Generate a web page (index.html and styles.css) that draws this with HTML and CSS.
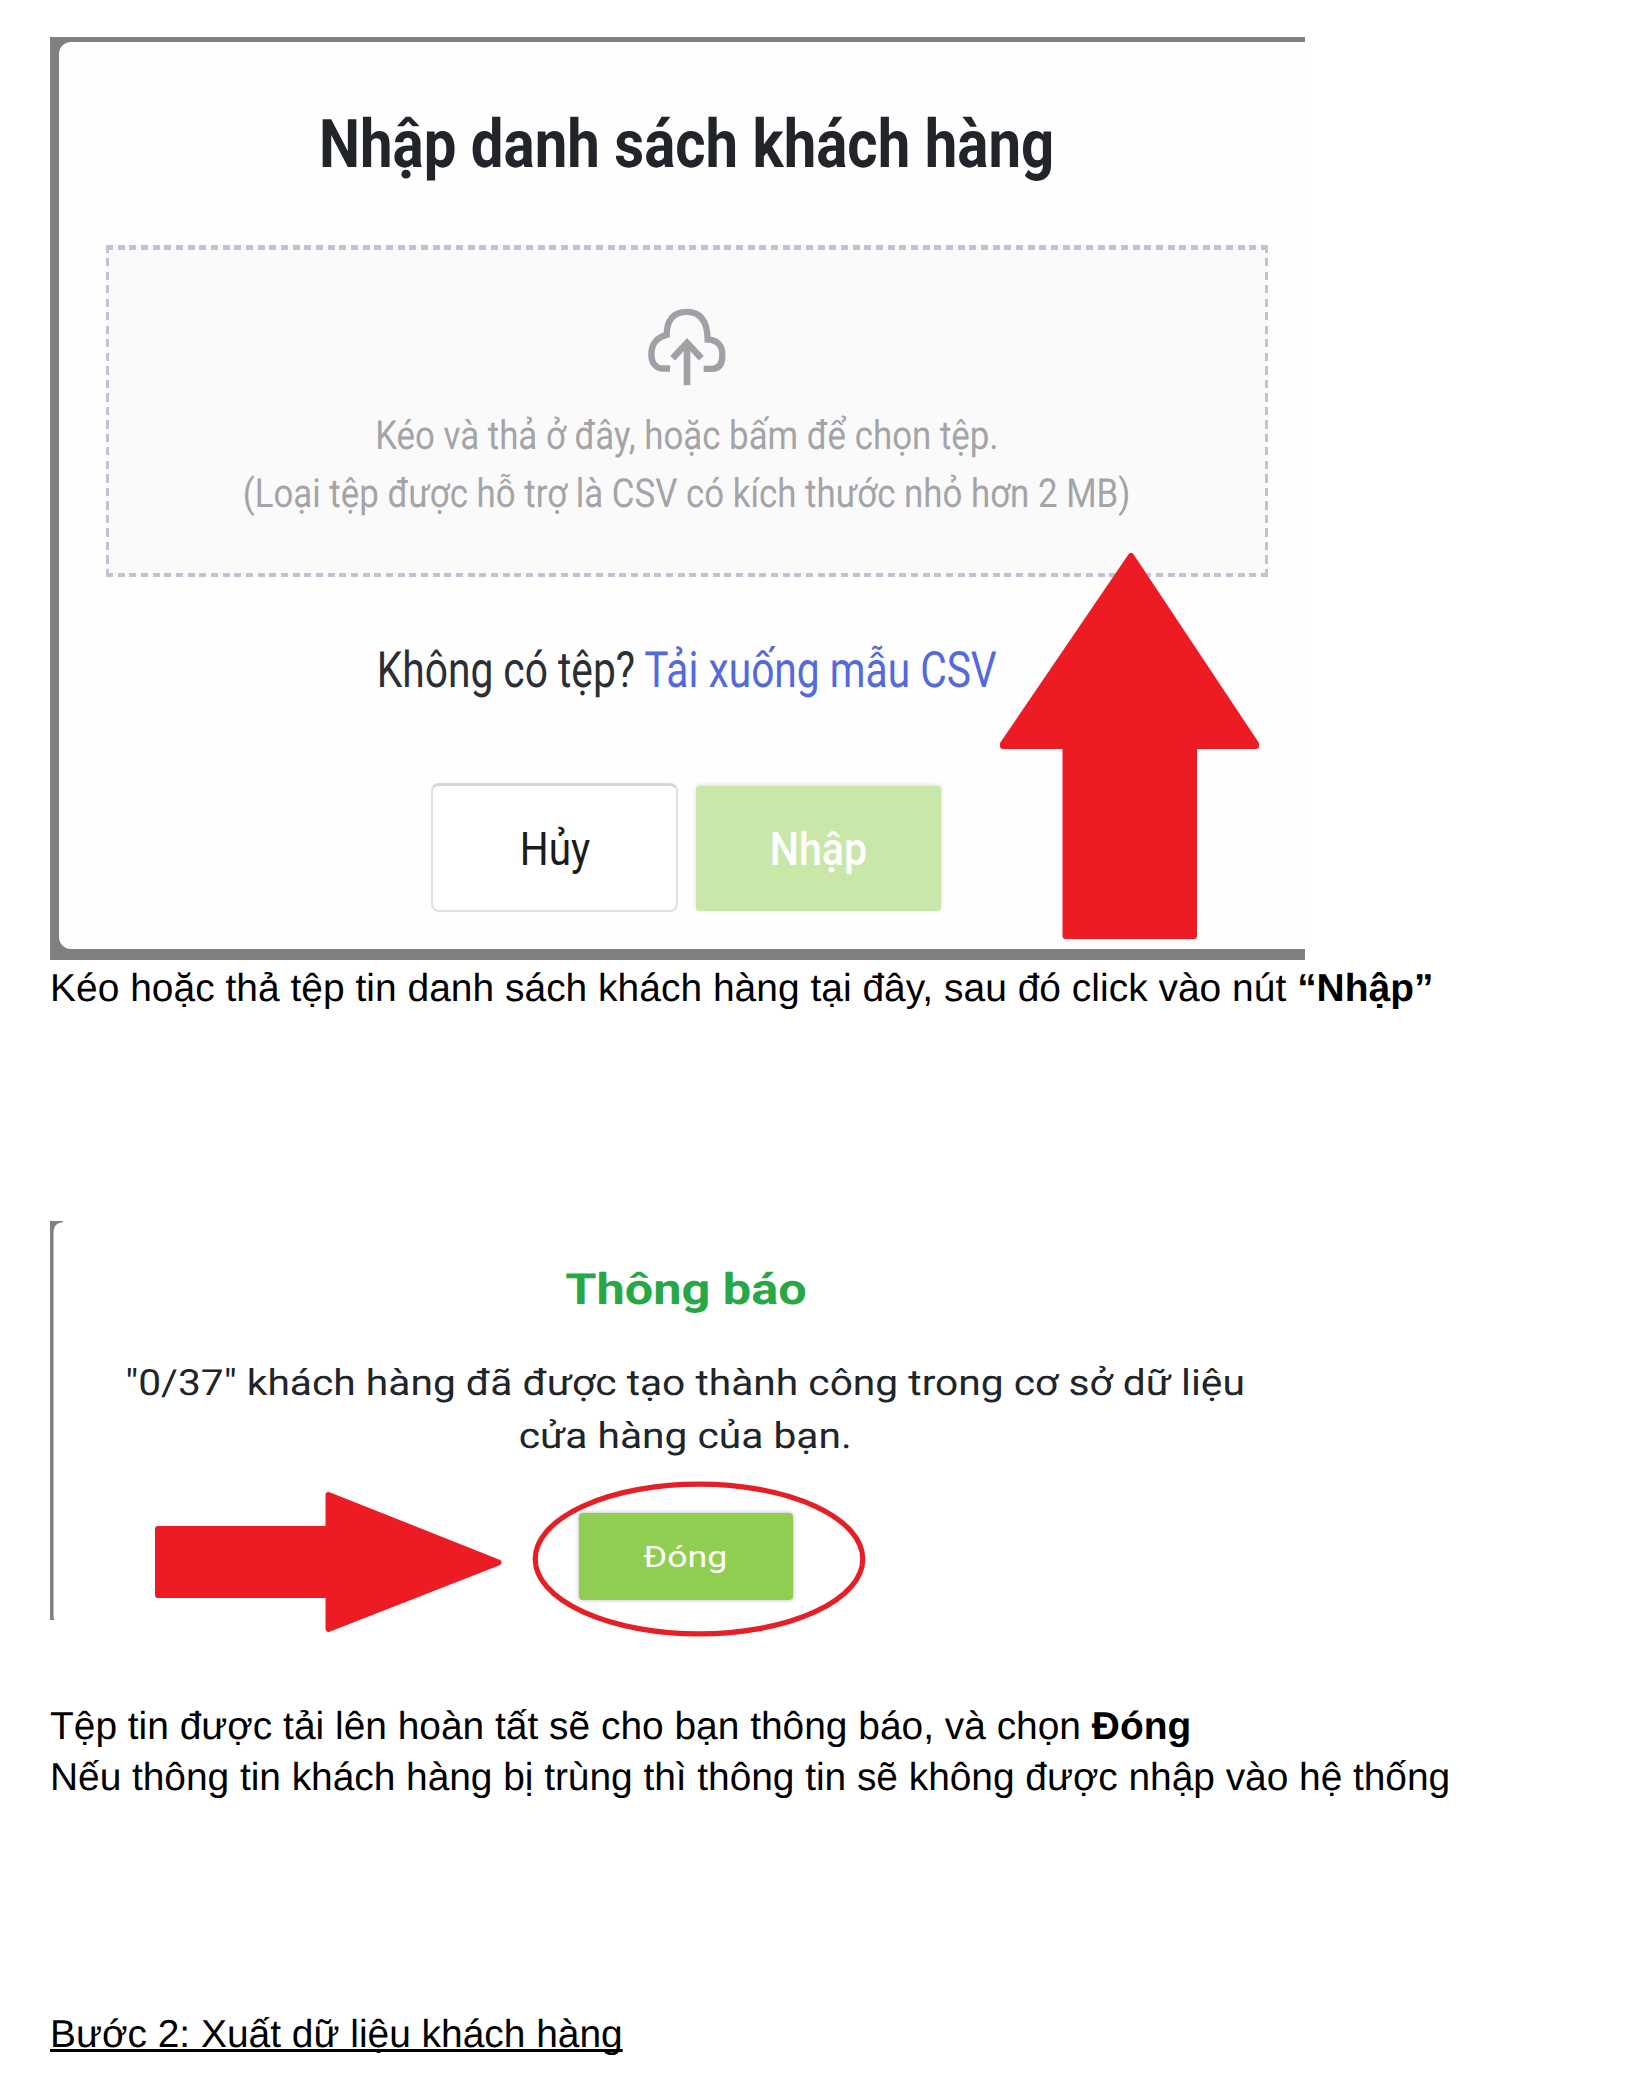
FILE: index.html
```html
<!DOCTYPE html>
<html lang="vi">
<head>
<meta charset="utf-8">
<title>Nhập danh sách khách hàng</title>
<link rel="stylesheet" href="styles.css">
</head>
<body>
<main class="page">
  <figure class="import">
    <div class="import-panel">
      <h1 class="import-title"><span>Nhập danh sách khách hàng</span></h1>
      <div class="dropzone">
        <svg class="cloud" viewBox="81 52.5 240 240" fill="none" stroke="#a0a1a7">
          <path stroke-width="19" d="M150 237H128C106 236 94 219 94 194C94 163 112 143 140 136C140 93 159 67 201 67C243 67 262 96 263 150C291 151 308 168 307 197C307 225 296 238 275 238H251"/>
          <path stroke-width="20" d="M201 287V157"/>
          <path stroke-width="20" d="M158 206L201 160L244 206"/>
        </svg>
        <p class="hint"><span>Kéo và thả ở đây, hoặc bấm để chọn tệp.</span></p>
        <p class="hint"><span>(Loại tệp được hỗ trợ là CSV có kích thước nhỏ hơn 2 MB)</span></p>
      </div>
      <p class="sample"><span>Không có tệp? <a class="link">Tải xuống mẫu CSV</a></span></p>
      <div class="actions">
        <button class="btn cancel"><span>Hủy</span></button>
        <button class="btn submit"><span>Nhập</span></button>
      </div>
    </div>
    <svg class="arrow-up" viewBox="0 0 262 388">
      <path d="M132 4L4 192V194H66.500V384H195V194H257V192Z"/>
    </svg>
  </figure>
  <p class="text caption">Kéo hoặc thả tệp tin danh sách khách hàng tại đây, sau đó click vào nút <b>“Nhập”</b></p>

  <figure class="notice">
    <svg class="notice-edge" viewBox="0 0 14 399"><path d="M0 0H13V1C6 2 3.500 5 3.500 13V396L4.500 399H0Z"/></svg>
    <h2 class="notice-title"><span>Thông báo</span></h2>
    <p class="message"><span>"0/37" khách hàng đã được tạo thành công trong cơ sở dữ liệu</span></p>
    <p class="message"><span>cửa hàng của bạn.</span></p>
    <button class="btn close"><span>Đóng</span></button>
    <svg class="arrow-right" viewBox="0 0 348 142">
      <path d="M3 38H173.500V4L343.500 71.500L173.500 138V104H3Z"/>
    </svg>
    <svg class="ring" viewBox="0 0 334 156"><ellipse cx="167" cy="78" rx="163.800" ry="74.900"/></svg>
  </figure>
  <p class="text done">Tệp tin được tải lên hoàn tất sẽ cho bạn thông báo, và chọn <b>Đóng</b></p>
  <p class="text duplicate">Nếu thông tin khách hàng bị trùng thì thông tin sẽ không được nhập vào hệ thống</p>
  <h2 class="text step">Bước 2: Xuất dữ liệu khách hàng</h2>
</main>
</body>
</html>
```
FILE: styles.css
```css
* { box-sizing: border-box; }
body { margin: 0; background: #fff; font-family: Roboto, sans-serif; text-rendering: geometricPrecision; }
h1, h2, p, figure { margin: 0; }
.page { height: 2092px; padding: 37px 0 0 50px; overflow: hidden; }

/* condensed or widened lettering is scaled about its centre */
h1 span, h2 span, p span, .btn span { display: inline-block; white-space: nowrap; }

.import { position: relative; width: 1255px; height: 923px; padding: 5px 0 11px 9px; background: #808080; }
.import-panel {
  display: flex; flex-direction: column; align-items: center;
  height: 907px; padding: 63px 37px 0 47px;
  background: #fefefe; border-radius: 12px 0 0 12px;
}
.import-title { height: 80px; font-size: 67px; line-height: 80px; font-weight: 700; color: #212529; }
.import-title span { transform: scaleX(.868); }

.dropzone {
  --d: #c2c2d4;
  display: flex; flex-direction: column; align-items: center;
  width: 1162px; height: 332px; margin-top: 60px; padding-top: 62px;
  background:
    repeating-linear-gradient(90deg, var(--d) 0 7px, transparent 7px 11.667px) top / 100% 5px no-repeat,
    repeating-linear-gradient(90deg, var(--d) 0 7px, transparent 7px 11.667px) bottom / 100% 4px no-repeat,
    repeating-linear-gradient(180deg, var(--d) 0 8px, transparent 8px 13.5px) left / 3px 100% no-repeat,
    repeating-linear-gradient(180deg, var(--d) 0 8px, transparent 8px 13.5px) right / 3px 100% no-repeat,
    #fafafa;
}
.cloud { width: 80px; height: 80px; margin-bottom: 20px; flex: none; }
.hint { height: 58px; font-size: 40px; line-height: 58px; color: #a4a4a8; }
.hint span { transform: scaleX(.871); }

.sample { height: 60px; margin-top: 64px; font-size: 50px; line-height: 60px; color: #2b2e32; }
.sample span { transform: scaleX(.8142); }
.link { color: #5369dd; }

.actions { display: flex; gap: 18px; margin: 82px 2px 0 0; }
.btn { display: flex; justify-content: center; border: 0; padding: 0; font-family: inherit; text-align: center; }
.cancel {
  width: 247px; height: 129px; border: 2px solid #e0e0e0; border-top: 3px solid #d6d6d6; border-radius: 8px;
  background: #fff; color: #1c1c1c; font-size: 46px; line-height: 126px;
}
.cancel span { transform: scaleX(.881); }
.submit {
  width: 245px; height: 125px; margin-top: 3px; border-radius: 4px;
  background: #c9e7a9; box-shadow: 0 -1px 4px rgba(0, 0, 0, .14); color: #fff; font-size: 46px; font-weight: 500; line-height: 126px;
}
.submit span { transform: scaleX(.8953); }

/* annotations drawn over the panels */
.arrow-up, .arrow-right { position: absolute; fill: #ed1c24; stroke: #ed1c24; stroke-width: 6px; stroke-linejoin: round; }
.arrow-up { left: 949px; top: 515px; width: 262px; height: 388px; }
.arrow-right { left: 105px; top: 270px; width: 348px; height: 142px; }
.ring { position: absolute; left: 482px; top: 260px; width: 334px; height: 156px; fill: none; stroke: #e61e25; stroke-width: 5.2px; }

.text { height: 51px; font: 38.9px/51px "Liberation Sans", Arial, sans-serif; color: #000; white-space: nowrap; }
.caption { margin-top: 3px; letter-spacing: .035px; }

.notice {
  position: relative; display: flex; flex-direction: column; align-items: center;
  width: 1255px; height: 399px; margin-top: 207px; padding: 43px 0 0 16px;
}
.notice-edge { position: absolute; left: 0; top: 0; width: 14px; height: 399px; fill: #808080; }
.notice-title { height: 52px; margin-bottom: 41px; font-size: 43px; line-height: 52px; font-weight: 700; color: #28a745; }
.notice-title span { transform: scaleX(1.173); }
.message { height: 52.5px; font-size: 36px; line-height: 52.5px; color: #212529; }
.message span { transform: scaleX(1.131); }
.close {
  width: 214px; height: 87px; margin-top: 51px; border-radius: 4px; flex: none;
  background: #8fce50; box-shadow: 0 0 4px rgba(0, 0, 0, .3); color: #fff; font-size: 30px; font-weight: 400; line-height: 87px;
}
.close span { transform: scaleX(1.19); }

.done { margin-top: 81px; }
.duplicate { letter-spacing: -.035px; }
.step { margin-top: 206px; font-weight: 400; text-decoration: underline; text-decoration-thickness: 3px; text-underline-offset: 2px; text-decoration-skip-ink: none; }
```
